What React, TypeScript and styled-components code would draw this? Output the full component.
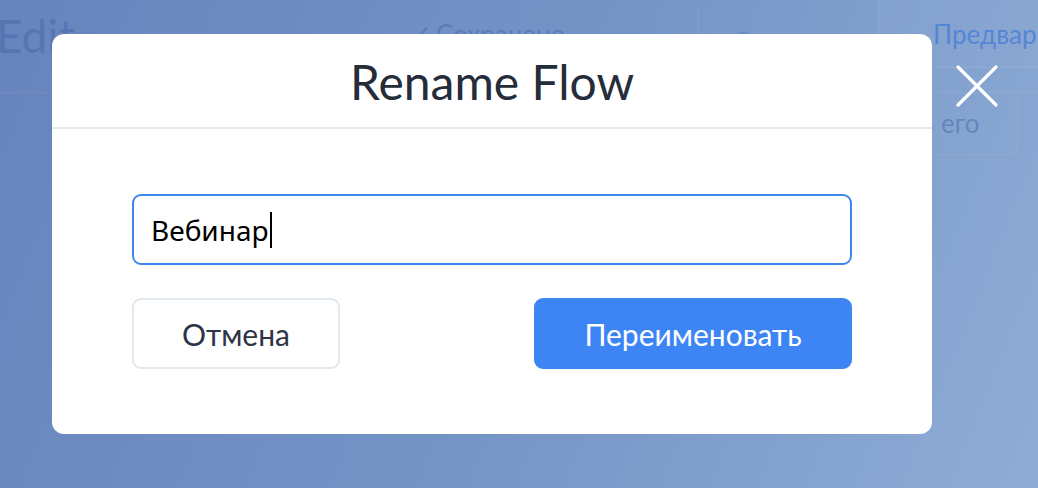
import React from "react";
import styled, { createGlobalStyle } from "styled-components";

const GlobalStyle = createGlobalStyle`
  html, body {
    margin: 0;
    padding: 0;
    width: 1038px;
    height: 488px;
    overflow: hidden;
  }
  * { box-sizing: border-box; }
  body { font-family: Lato, "Noto Sans", sans-serif; }
`;

const Page = styled.div`
  width: 1038px;
  height: 488px;
  background: linear-gradient(112deg, #6783bd 0%, #7494c6 50%, #8eacd5 100%);
  overflow: hidden;
`;

const Header = styled.header`
  height: 93px;
  display: flex;
  align-items: flex-start;
  border-bottom: 1px solid rgba(255, 255, 255, 0.07);
`;

const PageTitle = styled.h1`
  margin: 8px 0 0 -4px;
  font-size: 46px;
  font-weight: 400;
  color: rgba(70, 105, 170, 0.55);
  width: 412px;
`;

const Saved = styled.div`
  margin-top: 18px;
  display: flex;
  align-items: center;
  gap: 6px;
  font-size: 26px;
  color: rgba(70, 105, 170, 0.5);
  width: 290px;
`;

const GhostButton = styled.div`
  height: 82px;
  margin-top: 8px;
  width: 175px;
  border-left: 1px solid rgba(255, 255, 255, 0.08);
  padding: 18px 34px;
  font-size: 26px;
  color: rgba(70, 105, 170, 0.35);
`;

const PreviewButton = styled.div`
  margin-left: 5px;
  height: 68px;
  flex: 1;
  border: 1px solid rgba(255, 255, 255, 0.08);
  border-right: none;
  border-top: none;
  border-radius: 0 0 0 10px;
  background: rgba(255, 255, 255, 0.03);
  padding: 18px 0 0 54px;
  font-size: 26px;
  color: rgba(60, 120, 215, 0.7);
  white-space: nowrap;
  overflow: hidden;
`;

const SubRow = styled.div`
  display: flex;
  justify-content: flex-end;
  padding-right: 20px;
`;

const SubButton = styled.div`
  width: 150px;
  height: 62px;
  border: 1px solid rgba(255, 255, 255, 0.07);
  border-top: none;
  border-radius: 0 0 8px 8px;
  padding: 14px 0 0 72px;
  font-size: 26px;
  color: rgba(70, 105, 170, 0.5);
`;

const Overlay = styled.div`
  position: fixed;
  inset: 0;
  display: flex;
  align-items: flex-start;
  justify-content: flex-start;
  padding: 34px 0 0 52px;
`;

const Modal = styled.div`
  width: 880px;
  height: 400px;
  background: #ffffff;
  border-radius: 12px;
  display: flex;
  flex-direction: column;
`;

const ModalHeader = styled.div`
  height: 95px;
  border-bottom: 2px solid #e2e8f0;
  display: flex;
  align-items: center;
  justify-content: center;
`;

const ModalTitle = styled.h2`
  margin: 0;
  font-family: Lato, sans-serif;
  font-weight: 400;
  font-size: 48px;
  color: #252c3a;
  padding-top: 2px;
`;

const ModalBody = styled.div`
  padding: 65px 80px;
  display: flex;
  flex-direction: column;
  gap: 33px;
`;

const TextInput = styled.div`
  height: 71px;
  border: 2px solid #3f86ee;
  border-radius: 9px;
  display: flex;
  align-items: center;
  padding: 0 17px;
  font-family: "Noto Sans", sans-serif;
  font-size: 28px;
  color: #000000;
`;

const Caret = styled.span`
  display: inline-block;
  width: 2px;
  height: 36px;
  background: #000;
  margin-left: 1px;
`;

const Actions = styled.div`
  display: flex;
  justify-content: space-between;
`;

const Button = styled.button<{ $primary?: boolean; $width: number }>`
  width: ${(p) => p.$width}px;
  height: 71px;
  border-radius: 9px;
  font-family: Lato, sans-serif;
  font-size: 30px;
  font-weight: 400;
  cursor: pointer;
  padding: 0;
  border: 2px solid ${(p) => (p.$primary ? "#3f86ee" : "#e2e8f0")};
  background: ${(p) => (p.$primary ? "#3d85f5" : "#ffffff")};
  color: ${(p) => (p.$primary ? "#ffffff" : "#2d3546")};
`;

const CloseButton = styled.button`
  position: fixed;
  left: 952px;
  top: 61px;
  width: 50px;
  height: 50px;
  background: none;
  border: none;
  padding: 0;
  cursor: pointer;
`;

export default function App() {
  return (
    <>
      <GlobalStyle />
      <Page>
        <Header>
          <PageTitle>Edit</PageTitle>
          <Saved>
            <svg width="22" height="22" viewBox="0 0 24 24" fill="none" stroke="currentColor" strokeWidth="2.5" strokeLinecap="round">
              <path d="M4 13l5 5L20 6" />
            </svg>
            Сохранено
          </Saved>
          <GhostButton>Статистика</GhostButton>
          <PreviewButton>Предварительный просмотр</PreviewButton>
        </Header>
        <SubRow>
          <SubButton>его</SubButton>
        </SubRow>
      </Page>
      <Overlay>
        <Modal>
          <ModalHeader>
            <ModalTitle>Rename Flow</ModalTitle>
          </ModalHeader>
          <ModalBody>
            <TextInput>
              Вебинар
              <Caret />
            </TextInput>
            <Actions>
              <Button $width={208}>Отмена</Button>
              <Button $width={318} $primary>
                Переименовать
              </Button>
            </Actions>
          </ModalBody>
        </Modal>
      </Overlay>
      <CloseButton aria-label="Закрыть">
        <svg width="50" height="50" viewBox="0 0 50 50" fill="none" stroke="#ffffff" strokeWidth="3.2" strokeLinecap="round">
          <path d="M6 6L44 44M44 6L6 44" />
        </svg>
      </CloseButton>
    </>
  );
}
